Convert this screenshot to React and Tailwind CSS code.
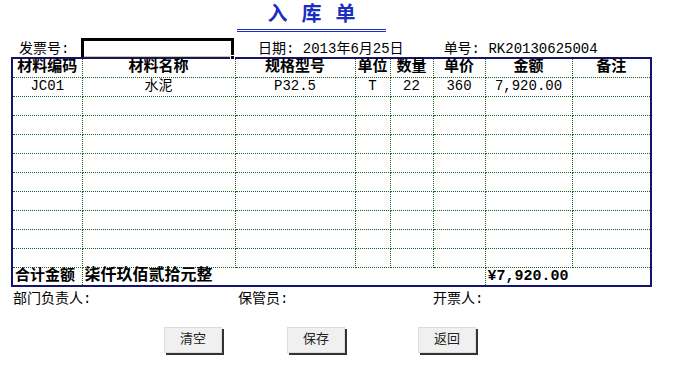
const cols = [70, 153, 120, 35, 43, 52, 87, 79];
const headers = ["材料编码", "材料名称", "规格型号", "单位", "数量", "单价", "金额", "备注"];
const firstRow = ["JC01", "水泥", "P32.5", "T", "22", "360", "7,920.00", ""];

const cjk = { fontFamily: '"Liberation Mono", "Noto Sans CJK SC", monospace' };

function Btn({ label, className }) {
    return (
        <button
            className={"w-[58px] h-[26px] bg-[#f0f0f0] border border-[#dcdcdc] text-[13px] text-[#222] shadow-[2px_2px_0_#333] " + className}
        >
            {label}
        </button>
    );
}

export default function App() {
    return (
        <div className="w-[679px] h-[380px] bg-white text-black overflow-hidden" style={cjk}>
            {/* title */}
            <div className="pt-[5px] ml-[237px] w-[149px] border-b-[3px] border-double border-[#1c2ec0] text-center">
                <span className="text-[20px] leading-[20px] font-bold text-[#1c2ec0] tracking-[14px] pl-[14px]">入库单</span>
            </div>

            {/* info row */}
            <div className="flex items-end mt-[6px] h-[19px] text-[14px] leading-[16px]">
                <span className="ml-[19px] w-[62px]">发票号:</span>
                <div className="relative w-[153px] h-[19px] border-[3px] border-black border-b-0">
                    <div className="absolute left-0 right-0 bottom-0 h-[1px] bg-[#d8cf7a]" />
                    <div className="absolute right-[-4px] bottom-[-3px] w-[5px] h-[5px] bg-black border border-white" />
                </div>
                <span className="ml-[24px]">日期: 2013年6月25日</span>
                <span className="ml-[40px]">单号: RK20130625004</span>
            </div>

            {/* table */}
            <table className="ml-[11px] border-collapse border-2 border-[#14146e] table-fixed" style={{ width: 639 }}>
                <colgroup>
                    {cols.map((w, i) => (
                        <col key={i} style={{ width: w }} />
                    ))}
                </colgroup>
                <tbody>
                    <tr className="h-[19px]">
                        {headers.map((h, i) => (
                            <td key={i} className="p-0 text-center text-[15px] leading-[17px] font-bold border border-dotted border-[#1f5f1f] border-t-0">
                                {h}
                            </td>
                        ))}
                    </tr>
                    {Array.from({ length: 10 }).map((_, r) => (
                        <tr key={r} className="h-[19px]">
                            {cols.map((_, i) => (
                                <td key={i} className="p-0 text-center text-[14px] leading-[17px] border border-dotted border-[#1f5f1f]">
                                    {r === 0 ? firstRow[i] : ""}
                                </td>
                            ))}
                        </tr>
                    ))}
                    <tr className="h-[19px]">
                        <td className="p-0 pl-[2px] text-[15px] leading-[17px] font-bold border border-dotted border-[#1f5f1f] border-b-0">合计金额</td>
                        <td colSpan={5} className="p-0 pl-[2px] text-[16px] leading-[17px] font-bold border border-dotted border-[#1f5f1f] border-b-0">柒仟玖佰贰拾元整</td>
                        <td colSpan={2} className="p-0 pl-[2px] text-[15px] leading-[17px] font-bold border-l border-dotted border-[#1f5f1f]">¥7,920.00</td>
                    </tr>
                </tbody>
            </table>

            {/* signatures */}
            <div className="flex mt-[4px] text-[14px] leading-[16px]">
                <span className="ml-[13px] w-[225px]">部门负责人:</span>
                <span className="w-[195px]">保管员:</span>
                <span>开票人:</span>
            </div>

            {/* buttons */}
            <div className="flex mt-[20px]">
                <Btn label="清空" className="ml-[164px]" />
                <Btn label="保存" className="ml-[65px]" />
                <Btn label="返回" className="ml-[73px]" />
            </div>
        </div>
    );
}
